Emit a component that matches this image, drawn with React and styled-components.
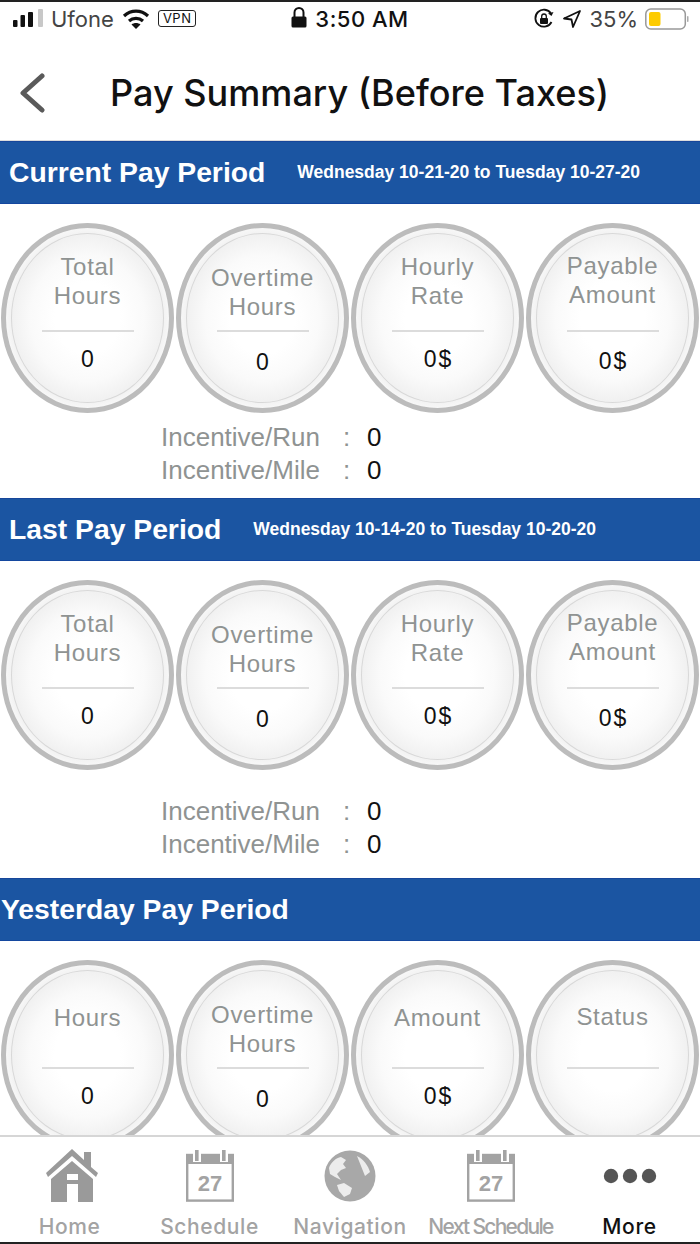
import React from 'react';
import styled, { createGlobalStyle } from 'styled-components';

const GlobalStyle = createGlobalStyle`
  html, body {
    margin: 0;
    padding: 0;
    background: #fff;
  }
  * {
    box-sizing: border-box;
  }
`;

const Page = styled.div`
  width: 700px;
  height: 1244px;
  display: flex;
  flex-direction: column;
  overflow: hidden;
  background: #fff;
  border-top: 2px solid #222;
  border-bottom: 2px solid #222;
  font-family: "Liberation Sans", Arial, sans-serif;
`;

const StatusBar = styled.div`
  height: 33px;
  flex: none;
  display: flex;
  align-items: center;
  justify-content: space-between;
  padding: 0 11px 0 13px;
  font-family: Inter, "Liberation Sans", sans-serif;
  font-size: 22px;
  color: #111;
`;

const StatusSide = styled.div`
  display: flex;
  align-items: center;
  gap: ${(p) => p.$gap || 8}px;
  width: ${(p) => p.$width}px;
  justify-content: ${(p) => p.$end ? 'flex-end' : 'flex-start'};
`;

const Carrier = styled.span`
  color: #444;
  font-size: 22px;
`;

const Clock = styled.span`
  font-weight: 500;
  letter-spacing: 0.5px;
`;

const VpnBadge = styled.span`
  border: 1.5px solid #222;
  border-radius: 3px;
  font-size: 13px;
  line-height: 15px;
  letter-spacing: 0.5px;
  padding: 0 4px;
`;

const NavBar = styled.div`
  height: 106px;
  flex: none;
  display: flex;
  align-items: center;
  padding: 10px 0 0 19px;
  border-bottom: 1px solid #ddd;
`;

const BackButton = styled.div`
  width: 91px;
  display: flex;
  align-items: center;
`;

const Title = styled.h1`
  margin: 0;
  font-family: Inter, "Liberation Sans", sans-serif;
  font-size: 36.1px;
  font-weight: 500;
  color: #111;
  white-space: nowrap;
`;

const Content = styled.div`
  flex: 1;
  min-height: 0;
  overflow: hidden;
`;

const PeriodBar = styled.div`
  height: 63px;
  display: flex;
  align-items: center;
  gap: 32px;
  padding-left: ${(p) => p.$flush ? 1 : 9}px;
  background: #1b55a2;
  border-top: 1px solid #17469a;
  border-bottom: 1px solid #14479f;
  color: #fff;
  font-weight: 700;
  white-space: nowrap;
`;

const PeriodName = styled.div`
  font-size: 28.3px;
`;

const PeriodDates = styled.div`
  font-size: 17.5px;
`;

const CircleRow = styled.div`
  display: grid;
  grid-template-columns: repeat(4, 173px);
  gap: 2px;
  padding: 19px 0 0 1px;
`;

const Circle = styled.div`
  position: relative;
  height: 190px;
  border: 5px solid #bcbcbc;
  border-radius: 50%;
  display: flex;
  flex-direction: column;
  align-items: center;
  background: radial-gradient(closest-side, #fff 40%, #fafafa 70%, #f1f1f1 92%, #f7f7f7 100%);

  &::before {
    content: '';
    position: absolute;
    inset: 5px;
    border: 1px solid #d8d8d8;
    border-radius: 50%;
  }
`;

const Label = styled.div`
  height: 102px;
  padding-top: ${(p) => p.$top}px;
  text-align: center;
  font-size: 24px;
  line-height: 29px;
  letter-spacing: 0.7px;
  color: #8f9392;
`;

const Rule = styled.div`
  width: 92px;
  height: 2px;
  flex: none;
  background: #dcdcdc;
`;

const Amount = styled.div`
  margin-top: ${(p) => p.$top}px;
  padding-left: 2px;
  font-size: 23px;
  line-height: 28px;
  letter-spacing: 2px;
  color: #111;
`;

const IncentiveList = styled.div`
  display: grid;
  grid-template-columns: 182px 24px auto;
  grid-auto-rows: 33px;
  align-items: center;
  padding: ${(p) => p.$top}px 0 ${(p) => p.$bottom}px 161px;
  font-size: 26px;
  color: #8f9392;
`;

const IncentiveValue = styled.span`
  color: #111;
`;

const TabBar = styled.div`
  height: 107px;
  flex: none;
  display: grid;
  grid-template-columns: 139px 141px 140px 141px 137px;
  border-top: 2px solid #d6d6d6;
  background: #fff;
`;

const Tab = styled.div`
  display: flex;
  flex-direction: column;
  align-items: center;
  padding-top: 11px;
`;

const TabIcon = styled.div`
  height: 56px;
  flex: none;
  display: flex;
  align-items: center;
  justify-content: center;
`;

const TabLabel = styled.div`
  margin-top: 10px;
  font-family: Inter, "Liberation Sans", sans-serif;
  font-size: 21px;
  font-weight: 500;
  letter-spacing: ${(p) => p.$tight ? -1.7 : 0.6}px;
  color: ${(p) => p.$active ? '#111' : '#a3a3a3'};
  white-space: nowrap;
`;

const SignalIcon = () => (
  <svg width="30" height="20" viewBox="0 0 30 20">
    <rect x="0" y="11" width="4.5" height="7" rx="1" fill="#111" />
    <rect x="7.5" y="6" width="4.5" height="12" rx="1" fill="#111" />
    <rect x="15" y="3" width="5" height="15" rx="1" fill="#111" />
    <rect x="25" y="0" width="5" height="18" rx="1" fill="#c8c8c8" />
  </svg>
);

const WifiIcon = () => (
  <svg width="28" height="22" viewBox="0 0 28 22" fill="none" stroke="#111" strokeWidth="3.2">
    <path d="M2 8 C9 1.5 19 1.5 26 8" />
    <path d="M7 13 C11 9.5 17 9.5 21 13" />
    <path d="M14 21 L9.5 16.5 C12 14.5 16 14.5 18.5 16.5 Z" fill="#111" stroke="none" />
  </svg>
);

const LockIcon = () => (
  <svg width="16" height="24" viewBox="0 0 16 24">
    <path d="M3.5 10 V5.5 a4.5 4.5 0 0 1 9 0 V10" fill="none" stroke="#111" strokeWidth="2" />
    <rect x="0.5" y="9.5" width="15" height="11" rx="1.5" fill="#111" />
  </svg>
);

const RotationLockIcon = () => (
  <svg width="22" height="22" viewBox="0 0 22 22" fill="none" stroke="#111" strokeWidth="1.8">
    <path d="M18.5 14 A8.5 8.5 0 1 1 18 5.5" />
    <path d="M20.5 4 L18.5 8 L15 5.5 Z" fill="#111" stroke="none" />
    <rect x="7" y="10" width="8" height="6" rx="1" fill="#111" stroke="none" />
    <path d="M8.7 10 V8.3 a2.3 2.3 0 0 1 4.6 0 V10" strokeWidth="1.3" />
  </svg>
);

const LocationIcon = () => (
  <svg width="20" height="20" viewBox="0 0 20 20">
    <path d="M18 2 L2 9.5 L9.5 10.5 L11 18 Z" fill="none" stroke="#111" strokeWidth="1.8" strokeLinejoin="round" />
  </svg>
);

const BatteryIcon = () => (
  <svg width="44" height="22" viewBox="0 0 44 22">
    <rect x="0.8" y="1" width="39.5" height="20" rx="5" fill="#fff" stroke="#999" strokeWidth="1.5" />
    <rect x="4" y="4" width="11.5" height="14" rx="2" fill="#fdcb00" />
    <rect x="42" y="8" width="1.5" height="6" rx="0.7" fill="#aaa" />
  </svg>
);

const BackIcon = () => (
  <svg width="27" height="40" viewBox="0 0 27 40" fill="none" stroke="#5a5a5a" strokeWidth="5" strokeLinecap="round" strokeLinejoin="round">
    <path d="M23 3 L4 20 L23 37" />
  </svg>
);

const HomeIcon = () => (
  <svg width="56" height="54" viewBox="-4 0 56 54" fill="#9a9a9a">
    <path d="M0 24 L26 0 L38 11 V3 H45 V18 L52 24 L50 28 L26 7 L2 28 Z" />
    <path fillRule="evenodd" d="M5 30 L26 12 L47 30 V53 H32 V35 H21 V53 H5 Z M21 25 H32 V31 H21 Z" />
  </svg>
);

const CalendarIcon = () => (
  <svg width="48" height="52" viewBox="0 0 48 52">
    <rect x="1.2" y="5" width="45.6" height="45.6" fill="#fff" stroke="#a3a3a3" strokeWidth="2.4" />
    <rect x="0" y="4" width="48" height="10" fill="#a3a3a3" />
    <rect x="7" y="0" width="8" height="12" fill="#fff" />
    <rect x="9" y="0" width="3.6" height="11" fill="#a3a3a3" />
    <rect x="34" y="0" width="8" height="12" fill="#fff" />
    <rect x="36" y="0" width="3.6" height="11" fill="#a3a3a3" />
    <text x="24" y="41" textAnchor="middle" fontFamily="Liberation Sans, sans-serif" fontWeight="700" fontSize="22" fill="#a3a3a3">27</text>
  </svg>
);

const GlobeIcon = () => (
  <svg width="52" height="52" viewBox="0 0 52 52">
    <circle cx="26" cy="26" r="25.5" fill="#a8a8a8" />
    <path fill="#ececec" d="M5 18 C7 12 12 8 17 7 L22 10 L19 14 L22 18 L17 20 L13 24 L17 30 L11 27 L6 24 Z" />
    <path fill="#ececec" d="M13 35 L20 33 L28 38 L26 44 L20 47 L15 41 Z" />
    <path fill="#ececec" d="M33 6 C39 9 44 15 46 22 L41 26 L37 16 Z" />
  </svg>
);

const MoreIcon = () => (
  <svg width="54" height="16" viewBox="0 0 54 16" fill="#555">
    <circle cx="8" cy="8" r="7.2" />
    <circle cx="27" cy="8" r="7.2" />
    <circle cx="46" cy="8" r="7.2" />
  </svg>
);

const periods = [
  {
    name: 'Current Pay Period',
    dates: 'Wednesday 10-21-20 to Tuesday 10-27-20',
    incentiveTop: 8,
    incentiveBottom: 11,
    stats: [
      { label: ['Total', 'Hours'], value: '0', top: 24, valueTop: 13 },
      { label: ['Overtime', 'Hours'], value: '0', top: 35, valueTop: 16 },
      { label: ['Hourly', 'Rate'], value: '0$', top: 24, valueTop: 13 },
      { label: ['Payable', 'Amount'], value: '0$', top: 23, valueTop: 15 },
    ],
  },
  {
    name: 'Last Pay Period',
    dates: 'Wednesday 10-14-20 to Tuesday 10-20-20',
    incentiveTop: 25,
    incentiveBottom: 17,
    stats: [
      { label: ['Total', 'Hours'], value: '0', top: 24, valueTop: 13 },
      { label: ['Overtime', 'Hours'], value: '0', top: 35, valueTop: 16 },
      { label: ['Hourly', 'Rate'], value: '0$', top: 24, valueTop: 13 },
      { label: ['Payable', 'Amount'], value: '0$', top: 23, valueTop: 15 },
    ],
  },
  {
    name: 'Yesterday Pay Period',
    flush: true,
    stats: [
      { label: ['Hours'], value: '0', top: 38, valueTop: 13 },
      { label: ['Overtime', 'Hours'], value: '0', top: 35, valueTop: 16 },
      { label: ['Amount'], value: '0$', top: 38, valueTop: 13 },
      { label: ['Status'], value: '', top: 37, valueTop: 13 },
    ],
  },
];

const tabs = [
  { label: 'Home', icon: <HomeIcon /> },
  { label: 'Schedule', icon: <CalendarIcon /> },
  { label: 'Navigation', icon: <GlobeIcon /> },
  { label: 'Next Schedule', icon: <CalendarIcon />, tight: true },
];

const Period = ({ period }) => (
  <section>
    <PeriodBar $flush={period.flush}>
      <PeriodName>{period.name}</PeriodName>
      {period.dates && <PeriodDates>{period.dates}</PeriodDates>}
    </PeriodBar>
    <CircleRow>
      {period.stats.map((stat) => (
        <Circle key={stat.label.join(' ')}>
          <Label $top={stat.top}>
            {stat.label.map((line) => <div key={line}>{line}</div>)}
          </Label>
          <Rule />
          <Amount $top={stat.valueTop}>{stat.value}</Amount>
        </Circle>
      ))}
    </CircleRow>
    {period.dates && (
      <IncentiveList $top={period.incentiveTop} $bottom={period.incentiveBottom}>
        <span>Incentive/Run</span>
        <span>:</span>
        <IncentiveValue>0</IncentiveValue>
        <span>Incentive/Mile</span>
        <span>:</span>
        <IncentiveValue>0</IncentiveValue>
      </IncentiveList>
    )}
  </section>
);

const App = () => (
  <Page>
    <GlobalStyle />
    <StatusBar>
      <StatusSide $width={250}>
        <SignalIcon />
        <Carrier>Ufone</Carrier>
        <WifiIcon />
        <VpnBadge>VPN</VpnBadge>
      </StatusSide>
      <StatusSide>
        <LockIcon />
        <Clock>3:50 AM</Clock>
      </StatusSide>
      <StatusSide $width={252} $gap={7} $end>
        <RotationLockIcon />
        <LocationIcon />
        <Carrier>35%</Carrier>
        <BatteryIcon />
      </StatusSide>
    </StatusBar>

    <NavBar>
      <BackButton><BackIcon /></BackButton>
      <Title>Pay Summary (Before Taxes)</Title>
    </NavBar>

    <Content>
      {periods.map((period) => <Period key={period.name} period={period} />)}
    </Content>

    <TabBar>
      {tabs.map((tab) => (
        <Tab key={tab.label}>
          <TabIcon>{tab.icon}</TabIcon>
          <TabLabel $tight={tab.tight}>{tab.label}</TabLabel>
        </Tab>
      ))}
      <Tab>
        <TabIcon><MoreIcon /></TabIcon>
        <TabLabel $active>More</TabLabel>
      </Tab>
    </TabBar>
  </Page>
);

export default App;
